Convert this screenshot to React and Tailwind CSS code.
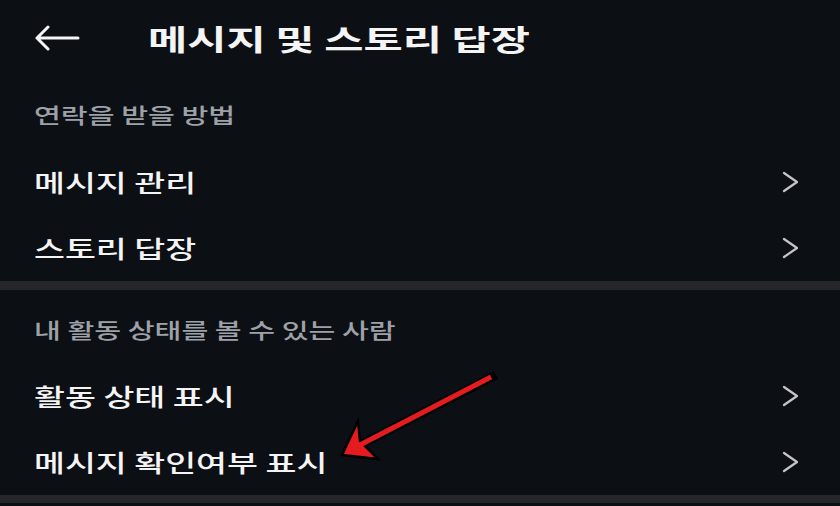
import React from "react";

const font = { fontFamily: '"Noto Sans CJK KR", "Noto Sans", sans-serif' };

function Chevron() {
  return (
    <svg width="18" height="22" viewBox="0 0 18 22" className="shrink-0">
      <path d="M2 2 L15 11 L2 20" fill="none" stroke="#c4c6ca" strokeWidth="2.2" strokeLinecap="round" strokeLinejoin="round" />
    </svg>
  );
}

function Item({ label }) {
  return (
    <div className="flex h-[66px] items-center justify-between pl-[34px] pr-[40px]">
      <span className="inline-block origin-left scale-x-[1.4] whitespace-nowrap text-[24px] font-medium leading-none text-[#f4f4f5]">{label}</span>
      <Chevron />
    </div>
  );
}

function SectionHeader({ label, pt }) {
  return (
    <div className={`flex h-[73px] items-center pl-[34px] ${pt}`}>
      <span className="inline-block origin-left scale-x-[1.39] whitespace-nowrap text-[21px] font-medium leading-none text-[#9ea2a8]">{label}</span>
    </div>
  );
}

export default function App() {
  return (
    <div className="relative h-[506px] w-[840px] overflow-hidden bg-[#0c0f14]" style={font}>
      <div className="flex h-[76px] items-center pl-[34px]">
        <svg width="46" height="26" viewBox="0 0 46 26" className="shrink-0">
          <path d="M44 13 H3 M14 2 L3 13 L14 24" fill="none" stroke="#f4f4f5" strokeWidth="3" strokeLinecap="round" strokeLinejoin="round" />
        </svg>
        <span className="ml-[68px] inline-block origin-left scale-x-[1.47] whitespace-nowrap text-[29px] font-bold leading-none text-[#f4f4f5]">
          메시지 및 스토리 답장
        </span>
      </div>

      <SectionHeader label="연락을 받을 방법" pt="pt-[3px]" />
      <Item label="메시지 관리" />
      <Item label="스토리 답장" />

      <div className="h-[9px] bg-[#25272b]" />

      <SectionHeader label="내 활동 상태를 볼 수 있는 사람" pt="pt-[6px]" />
      <Item label="활동 상태 표시" />
      <Item label="메시지 확인여부 표시" />

      <div className="h-[8px] bg-[#25272b]" />

      <svg className="absolute left-0 top-0" width="840" height="506" viewBox="0 0 840 506">
        <path d="M492 377 L356 447" stroke="#000" strokeWidth="9" strokeLinecap="square" />
        <path d="M342 455 L358 421 L360 441 L378 459 Z" fill="#e41c20" stroke="#000" strokeWidth="2.5" strokeLinejoin="miter" />
        <path d="M491 377 L358 446" stroke="#e41c20" strokeWidth="5" strokeLinecap="butt" />
      </svg>
    </div>
  );
}
